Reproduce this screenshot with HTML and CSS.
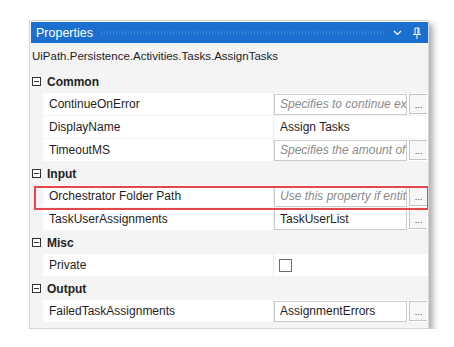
FILE: index.html
```html
<!DOCTYPE html>
<html lang="en">
<head>
    <meta charset="UTF-8">
    <meta name="viewport" content="width=device-width, initial-scale=1.0">
    <title>Properties</title>
    <link rel="stylesheet" href="styles.css">
</head>
<body>
    <div class="panel">
        <div class="titlebar">
            <span class="title">Properties</span>
            <span class="grip"></span>
            <svg class="chevron" width="9" height="6" viewBox="0 0 9 6">
                <path d="M1 1 L4.5 4.5 L8 1" fill="none" stroke="#fff" stroke-width="1.2"/>
            </svg>
            <svg class="pin" width="10" height="12" viewBox="0 0 10 12">
                <path d="M3 1 H7 V7 M3 1 V7 M6 1 V7" fill="none" stroke="#fff" stroke-width="1"/>
                <path d="M1 7.5 H9" stroke="#fff" stroke-width="1"/>
                <path d="M5 8 V12" stroke="#fff" stroke-width="1"/>
            </svg>
        </div>
        <div class="subtitle">UiPath.Persistence.Activities.Tasks.AssignTasks</div>

        <div class="grid">
            <div class="cat"><span class="toggle"></span>Common</div>
            <div class="prop">
                <div class="name">ContinueOnError</div>
                <div class="value">
                    <div class="box hint">Specifies to continue exec</div>
                    <div class="more">...</div>
                </div>
            </div>
            <div class="prop">
                <div class="name">DisplayName</div>
                <div class="value"><div class="plain">Assign Tasks</div></div>
            </div>
            <div class="prop">
                <div class="name">TimeoutMS</div>
                <div class="value">
                    <div class="box hint">Specifies the amount of ti</div>
                    <div class="more">...</div>
                </div>
            </div>

            <div class="cat"><span class="toggle"></span>Input</div>
            <div class="prop marked">
                <div class="name">Orchestrator Folder Path</div>
                <div class="value">
                    <div class="box hint">Use this property if entities</div>
                    <div class="more">...</div>
                </div>
            </div>
            <div class="prop">
                <div class="name">TaskUserAssignments</div>
                <div class="value">
                    <div class="box">TaskUserList</div>
                    <div class="more">...</div>
                </div>
            </div>

            <div class="cat"><span class="toggle"></span>Misc</div>
            <div class="prop">
                <div class="name">Private</div>
                <div class="value"><span class="check"></span></div>
            </div>

            <div class="cat"><span class="toggle"></span>Output</div>
            <div class="prop">
                <div class="name">FailedTaskAssignments</div>
                <div class="value">
                    <div class="box">AssignmentErrors</div>
                    <div class="more">...</div>
                </div>
            </div>
        </div>
    </div>
</body>
</html>
```

FILE: styles.css
```css
body {
    margin: 0;
    background: #fff;
    font-family: 'Liberation Sans', Arial, sans-serif;
    font-size: 12px;
    color: #1e1e1e;
}

.panel {
    width: 400px;
    box-sizing: border-box;
    margin: 20px 0 0 29px;
    padding: 1px 0 5px;
    background: #f4f4f4;
    border: 1px solid #d6d6d6;
    box-shadow: 4px 4px 6px rgba(0, 0, 0, 0.32);
    overflow: hidden;
}

.titlebar {
    display: flex;
    align-items: center;
    height: 21px;
    margin: 0 0 0 1px;
    padding: 0 6px 0 5px;
    background: #1b70cf;
    color: #fff;
}

.title {
    font-size: 12.5px;
}

.grip {
    flex: 1;
    height: 4px;
    margin: 0 8px 0 7px;
    background-image: radial-gradient(rgba(255, 255, 255, 0.22) 30%, transparent 45%);
    background-size: 3px 2px;
}

.chevron {
    display: block;
    margin-right: 10px;
}

.pin {
    display: block;
}

.subtitle {
    height: 27px;
    line-height: 27px;
    padding-left: 2px;
    font-size: 11.5px;
    white-space: nowrap;
}

.cat {
    display: flex;
    align-items: center;
    height: 23px;
    font-weight: bold;
}

.toggle {
    position: relative;
    width: 7px;
    height: 7px;
    margin: 0 6px 0 2px;
    border: 1px solid #333;
    background: #fff;
}

.toggle::after {
    content: "";
    position: absolute;
    left: 1px;
    right: 1px;
    top: 3px;
    height: 1px;
    background: #333;
}

.prop {
    display: flex;
    height: 23px;
    padding-left: 13px;
    position: relative;
}

.name {
    width: 231px;
    padding-left: 6px;
    box-sizing: border-box;
    line-height: 23px;
    background: #fff;
    border-right: 1px solid #ececec;
    border-bottom: 1px solid #f4f4f4;
    white-space: nowrap;
}

.value {
    flex: 1;
    display: flex;
    align-items: center;
    background: #fff;
    border-bottom: 1px solid #f4f4f4;
    min-width: 0;
}

.box {
    width: 133px;
    height: 21px;
    flex: none;
    box-sizing: border-box;
    padding-left: 5px;
    line-height: 19px;
    border: 1px solid #cbcbcb;
    background: #fff;
    white-space: nowrap;
    overflow: hidden;
    text-overflow: clip;
}

.hint {
    color: #8a8a8a;
    font-style: italic;
}

.plain {
    padding-left: 6px;
    line-height: 21px;
}

.more {
    display: flex;
    align-items: flex-end;
    justify-content: center;
    width: 18px;
    height: 20px;
    flex: none;
    margin-left: 2px;
    padding-bottom: 3px;
    box-sizing: border-box;
    border: 1px solid #c4c4c4;
    border-right: none;
    background: #f7f7f7;
    font-size: 9px;
    line-height: 9px;
    color: #444;
    overflow: hidden;
}

.check {
    width: 13px;
    height: 13px;
    box-sizing: border-box;
    margin-left: 5px;
    border: 1px solid #6e6e6e;
    background: #fff;
}

.marked::after {
    content: "";
    position: absolute;
    z-index: 2;
    top: 1px;
    left: 4px;
    right: -1px;
    height: 24px;
    box-sizing: border-box;
    border: 2px solid #e2474c;
}
```
